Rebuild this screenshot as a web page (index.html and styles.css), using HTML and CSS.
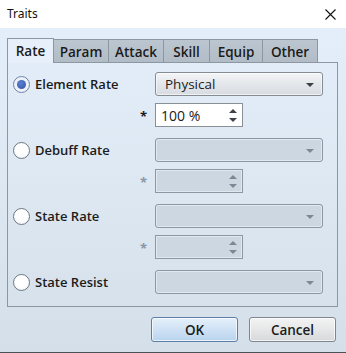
FILE: index.html
```html
<!DOCTYPE html>
<html>
<head>
<meta charset="utf-8">
<link rel="stylesheet" href="styles.css">
</head>
<body>
<div class="window">
  <div class="titlebar">
    <span class="title">Traits</span>
    <svg class="close" width="11" height="11" viewBox="0 0 11 11"><path d="M0.5 0.5 L10.5 10.5 M10.5 0.5 L0.5 10.5" stroke="#111" stroke-width="1.1" fill="none"/></svg>
  </div>
  <div class="main">
    <div class="tabs">
      <div class="tab active w-rate">Rate</div>
      <div class="tab w-param">Param</div>
      <div class="tab w-attack">Attack</div>
      <div class="tab w-skill">Skill</div>
      <div class="tab w-equip">Equip</div>
      <div class="tab w-other">Other</div>
    </div>
    <div class="panel">
      <div class="group">
        <div class="row">
          <label class="radio-label"><span class="radio checked"></span>Element Rate</label>
          <div class="combo"><span>Physical</span><span class="arrow"></span></div>
        </div>
        <div class="row">
          <span class="star">*</span>
          <div class="spin"><span>100 %</span><span class="spinarrows"><span class="up"></span><span class="down"></span></span></div>
        </div>
      </div>
      <div class="group">
        <div class="row">
          <label class="radio-label"><span class="radio"></span>Debuff Rate</label>
          <div class="combo disabled"><span></span><span class="arrow"></span></div>
        </div>
        <div class="row">
          <span class="star disabled">*</span>
          <div class="spin disabled"><span></span><span class="spinarrows"><span class="up"></span><span class="down"></span></span></div>
        </div>
      </div>
      <div class="group">
        <div class="row">
          <label class="radio-label"><span class="radio"></span>State Rate</label>
          <div class="combo disabled"><span></span><span class="arrow"></span></div>
        </div>
        <div class="row">
          <span class="star disabled">*</span>
          <div class="spin disabled"><span></span><span class="spinarrows"><span class="up"></span><span class="down"></span></span></div>
        </div>
      </div>
      <div class="group">
        <div class="row">
          <label class="radio-label"><span class="radio"></span>State Resist</label>
          <div class="combo disabled"><span></span><span class="arrow"></span></div>
        </div>
      </div>
    </div>
    <div class="buttons">
      <div class="btn default">OK</div>
      <div class="btn">Cancel</div>
    </div>
  </div>
</div>
</body>
</html>
```
FILE: styles.css
```css
html, body {
  margin: 0;
  padding: 0;
}
body {
  width: 346px;
  height: 353px;
  overflow: hidden;
  font-family: "Open Sans", "Noto Sans", sans-serif;
  color: #1b1b1b;
}
.window {
  width: 346px;
  height: 353px;
  box-sizing: border-box;
  border-bottom: 1px solid #4b5057;
  display: flex;
  flex-direction: column;
}
.titlebar {
  height: 28px;
  background: #ffffff;
  display: flex;
  align-items: center;
  justify-content: space-between;
  padding: 0 10px 0 7px;
  flex: none;
}
.title {
  font-size: 12px;
  color: #111;
  font-family: "Noto Sans", sans-serif;
  margin-top: -1px;
}
.main {
  flex: 1;
  background: linear-gradient(#e4eefa, #dfe9f4 40%, #d5dfe9);
  padding: 10px 8px 0 7px;
  display: flex;
  flex-direction: column;
}
.tabs {
  display: flex;
  height: 24px;
  align-items: flex-end;
  position: relative;
  z-index: 1;
}
.tab {
  box-sizing: border-box;
  height: 23px;
  border: 1px solid #8d97a1;
  border-bottom: none;
  border-left: none;
  background: linear-gradient(#bcc6d0, #b2bcc6);
  font-size: 13.5px;
  font-weight: 600;
  display: flex;
  align-items: center;
  justify-content: center;
  padding-top: 1px;
}
.tab.active {
  height: 25px;
  margin-bottom: -1px;
  border-left: 1px solid #8d97a1;
  background: #e6effa;
  padding-bottom: 2px;
}
.w-rate { width: 47px; }
.w-param { width: 55px; }
.w-attack { width: 55px; }
.w-skill { width: 46px; }
.w-equip { width: 53px; }
.w-other { width: 55px; }

.panel {
  width: 331px;
  box-sizing: border-box;
  border: 1px solid #8d97a1;
  padding: 9px 14px 12px 5px;
  display: flex;
  flex-direction: column;
  gap: 11px;
}
.group {
  display: flex;
  flex-direction: column;
  gap: 7px;
}
.row {
  display: flex;
  align-items: center;
  justify-content: flex-end;
  height: 24px;
}
.radio-label {
  flex: 1;
  display: flex;
  align-items: center;
  gap: 5px;
  font-size: 13px;
  font-weight: 600;
}
.radio {
  width: 17px;
  height: 17px;
  box-sizing: border-box;
  border-radius: 50%;
  border: 1px solid #6f7882;
  background: radial-gradient(circle at 50% 40%, #ffffff 50%, #e8ecf0 100%);
  display: flex;
  align-items: center;
  justify-content: center;
}
.radio.checked {
  border-color: #6c83ad;
  background: #eef2f8;
}
.radio.checked::after {
  content: "";
  width: 9px;
  height: 9px;
  border-radius: 50%;
  background: radial-gradient(circle at 40% 35%, #5a7fd0, #3355aa);
}
.combo {
  width: 168px;
  height: 24px;
  box-sizing: border-box;
  border: 1px solid #858c94;
  border-radius: 3px;
  background: linear-gradient(#f4f5f7, #e3e6ea 50%, #d8dce1);
  display: flex;
  align-items: center;
  justify-content: space-between;
  padding: 0 8px 0 9px;
  font-size: 13.5px;
  box-shadow: inset 0 0 0 1px rgba(255,255,255,0.6);
}
.combo.disabled {
  background: #ccd7e2;
  border-color: #8c97a3;
  box-shadow: inset 0 0 0 1px #e0e8f0;
}
.arrow {
  width: 0;
  height: 0;
  border-left: 4px solid transparent;
  border-right: 4px solid transparent;
  border-top: 4px solid #3a3f45;
  margin-top: 1px;
}
.combo.disabled .arrow {
  border-top-color: #7d8893;
}
.star {
  font-size: 13px;
  font-weight: 700;
  margin-right: 8px;
  margin-top: 1px;
  color: #1b1b1b;
}
.star.disabled {
  color: #8996a5;
}
.spin {
  width: 88px;
  height: 24px;
  box-sizing: border-box;
  border: 1px solid #8a8f95;
  background: #ffffff;
  display: flex;
  align-items: center;
  justify-content: space-between;
  padding: 0 5px 0 5px;
  font-size: 14px;
  margin-right: 80px;
}
.spin.disabled {
  background: #ccd7e2;
  border-color: #8c97a3;
  box-shadow: inset 0 0 0 1px #e0e8f0;
}
.spinarrows {
  display: flex;
  flex-direction: column;
  gap: 5px;
}
.up {
  width: 0;
  height: 0;
  border-left: 4px solid transparent;
  border-right: 4px solid transparent;
  border-bottom: 4px solid #3d4248;
}
.down {
  width: 0;
  height: 0;
  border-left: 4px solid transparent;
  border-right: 4px solid transparent;
  border-top: 4px solid #3d4248;
}
.spin.disabled .up { border-bottom-color: #7d8893; }
.spin.disabled .down { border-top-color: #7d8893; }

.buttons {
  display: flex;
  justify-content: flex-end;
  gap: 11px;
  margin-top: 10px;
  margin-right: 2px;
}
.btn {
  width: 87px;
  height: 25px;
  box-sizing: border-box;
  border: 1px solid #80868d;
  border-radius: 3px;
  background: linear-gradient(#f3f3f3, #e6e7e8 50%, #d6d8da);
  display: flex;
  align-items: center;
  justify-content: center;
  font-size: 13.5px;
  font-weight: 600;
  box-shadow: inset 0 0 0 1px rgba(255,255,255,0.7);
}
.btn.default {
  border-color: #5c7fa8;
  background: linear-gradient(#e5f0fb, #cfe2f5 50%, #b9d3ee);
}
```
